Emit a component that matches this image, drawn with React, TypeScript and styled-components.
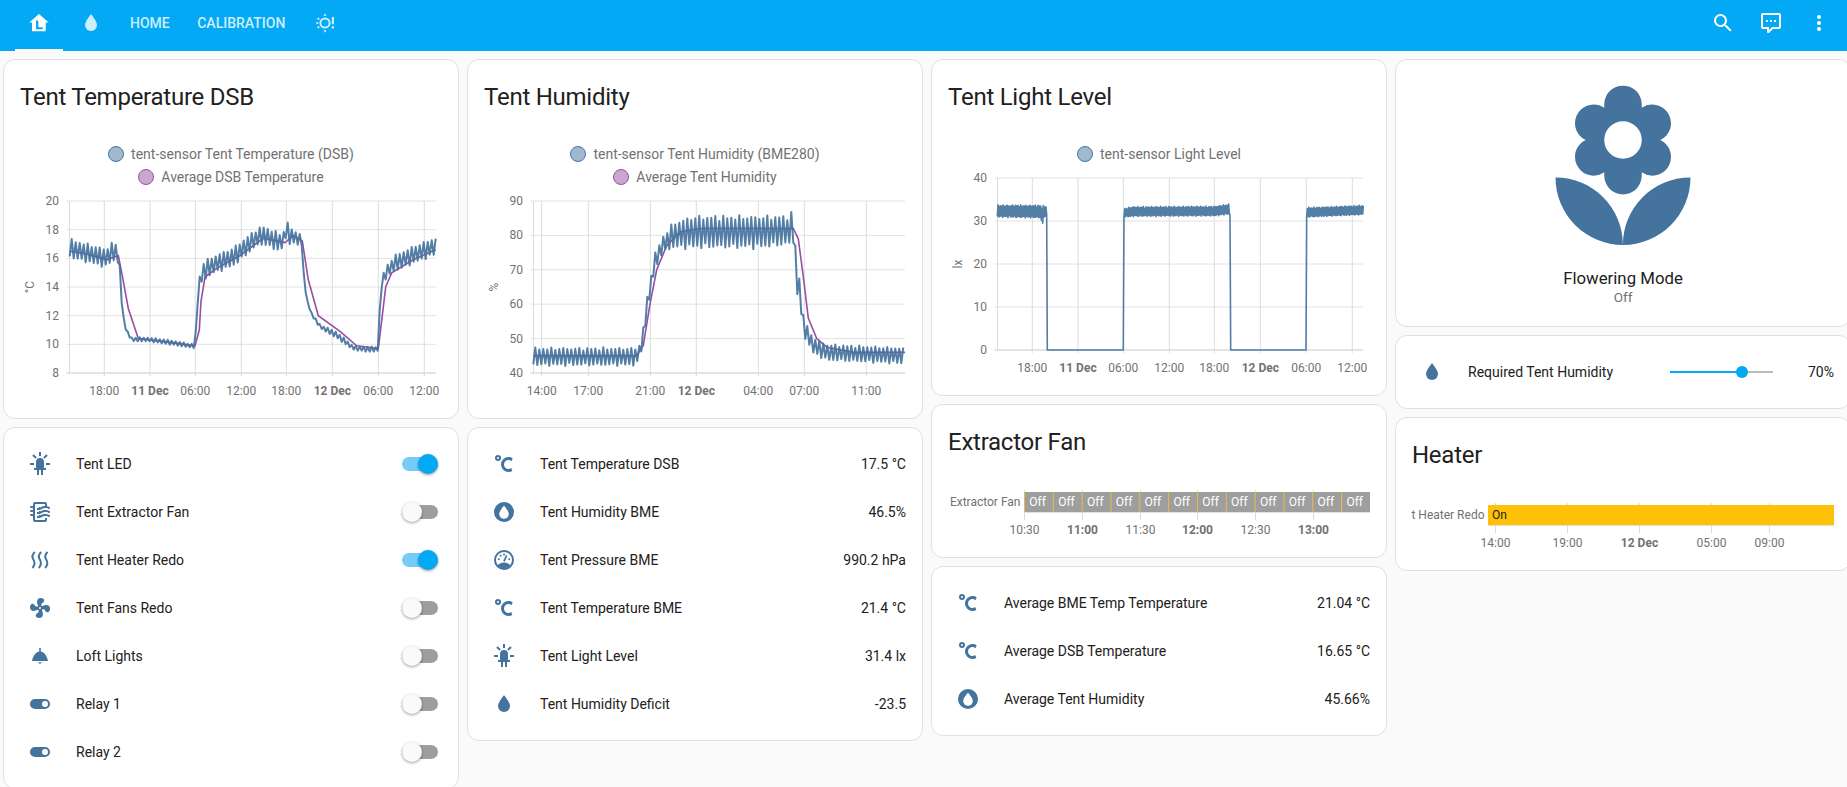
import styled, { createGlobalStyle } from "styled-components";

const BLUE = "#44739e";
const PURPLE = "#984ea3";

const GlobalStyle = createGlobalStyle`
  html, body {
    margin: 0;
    height: 100%;
    overflow: hidden;
    background: #fafafa;
  }
  body {
    font-family: Roboto, "Liberation Sans", sans-serif;
    color: #212121;
  }
`;

// mdi paths
const ICONS = {
  led: "M11,0V4H13V0H11M18.3,2.29L15.24,5.29L16.64,6.71L19.7,3.71L18.3,2.29M5.7,2.29L4.3,3.71L7.36,6.71L8.76,5.29L5.7,2.29M2,11V13H6V11H2M18,11V13H22V11H18M12,6A4,4 0 0,0 8,10V16H6V18H9V23H11V18H13V23H15V18H18V16H16V10A4,4 0 0,0 12,6Z",
  filter:
    "M19,18.31V20A2,2 0 0,1 17,22H7A2,2 0 0,1 5,20V16.3C4.54,16.12 3.95,16 3,16A1,1 0 0,1 2,15A1,1 0 0,1 3,14C3.82,14 4.47,14.08 5,14.21V12.3C4.54,12.12 3.95,12 3,12A1,1 0 0,1 2,11A1,1 0 0,1 3,10C3.82,10 4.47,10.08 5,10.21V8.3C4.54,8.12 3.95,8 3,8A1,1 0 0,1 2,7A1,1 0 0,1 3,6C3.82,6 4.47,6.08 5,6.21V4A2,2 0 0,1 7,2H17A2,2 0 0,1 19,4V6.16C20.78,6.47 21.54,7.13 21.71,7.29C22.1,7.68 22.1,8.32 21.71,8.71C21.32,9.1 20.8,9.09 20.29,8.71V8.71C20.29,8.71 19.25,8 17,8C15.74,8 14.91,8.41 13.95,8.9C12.91,9.41 11.74,10 10,10C9.64,10 9.31,10 9,9.96V7.95C9.3,8 9.63,8 10,8C11.26,8 12.09,7.59 13.05,7.11C14.09,6.59 15.27,6 17,6V4H7V20H17V18C18.5,18 18.97,18.15 19,18.31M17,10C15.27,10 14.09,10.59 13.05,11.11C12.09,11.59 11.26,12 10,12C9.63,12 9.3,12 9,11.95V13.96C9.31,14 9.64,14 10,14C11.74,14 12.91,13.41 13.95,12.9C14.91,12.42 15.74,12 17,12C19.25,12 20.29,12.71 20.29,12.71V12.71C20.8,13.1 21.32,13.1 21.71,12.71C22.1,12.32 22.1,11.69 21.71,11.29C21.5,11.08 20.25,10 17,10M17,14C15.27,14 14.09,14.59 13.05,15.11C12.09,15.59 11.26,16 10,16C9.63,16 9.3,16 9,15.95V17.96C9.31,18 9.64,18 10,18C11.74,18 12.91,17.41 13.95,16.9C14.91,16.42 15.74,16 17,16C19.25,16 20.29,16.71 20.29,16.71V16.71C20.8,17.1 21.32,17.1 21.71,16.71C22.1,16.32 22.1,15.69 21.71,15.29C21.5,15.08 20.25,14 17,14Z",
  fan: "M12,11A1,1 0 0,0 11,12A1,1 0 0,0 12,13A1,1 0 0,0 13,12A1,1 0 0,0 12,11M12.5,2C17,2 17.11,5.57 14.75,6.75C13.76,7.24 13.32,8.29 13.13,9.22C13.61,9.42 14.03,9.73 14.35,10.13C18.05,8.13 22.03,8.92 22.03,12.5C22.03,17 18.46,17.1 17.28,14.73C16.78,13.74 15.72,13.3 14.79,13.11C14.59,13.59 14.28,14 13.88,14.34C15.87,18.03 15.08,22 11.5,22C7,22 6.91,18.42 9.27,17.24C10.25,16.75 10.69,15.71 10.89,14.79C10.4,14.59 9.97,14.27 9.65,13.87C5.96,15.85 2,15.07 2,11.5C2,7 5.56,6.89 6.74,9.26C7.24,10.25 8.29,10.68 9.22,10.87C9.41,10.39 9.73,9.97 10.14,9.65C8.15,5.96 8.94,2 12.5,2Z",
  ceiling: "M11.2 4h1.6v3.5c3.7.6 6.2 4.6 7.2 9.5H4c1-4.9 3.5-8.9 7.2-9.5zM10 18.2h4L12 20z",
  toggle:
    "M17,7H7A5,5 0 0,0 2,12A5,5 0 0,0 7,17H17A5,5 0 0,0 22,12A5,5 0 0,0 17,7M17,15A3,3 0 0,1 14,12A3,3 0 0,1 17,9A3,3 0 0,1 20,12A3,3 0 0,1 17,15Z",
  celsius:
    "M16.5,5C18.05,5 19.5,5.47 20.69,6.28L19.53,9.17C18.73,8.44 17.67,8 16.5,8C14,8 12,10 12,12.5C12,15 14,17 16.5,17C17.53,17 18.47,16.66 19.23,16.08L20.37,18.93C19.24,19.61 17.92,20 16.5,20A7.5,7.5 0 0,1 9,12.5A7.5,7.5 0 0,1 16.5,5M6,3A3,3 0 0,1 9,6A3,3 0 0,1 6,9A3,3 0 0,1 3,6A3,3 0 0,1 6,3M6,5A1,1 0 0,0 5,6A1,1 0 0,0 6,7A1,1 0 0,0 7,6A1,1 0 0,0 6,5Z",
  water: "M12,20A6,6 0 0,1 6,14C6,10 12,3.25 12,3.25C12,3.25 18,10 18,14A6,6 0 0,1 12,20Z",
  waterCircle:
    "M12 2A10 10 0 1 0 12 22A10 10 0 1 0 12 2ZM12 5.8C12 5.8 16.8 10.8 16.8 14A4.8 4.8 0 0 1 7.2 14C7.2 10.8 12 5.8 12 5.8Z",
  flower:
    "M3,13A9,9 0 0,0 12,22C12,17 7.97,13 3,13M12,5.5A2.5,2.5 0 0,1 14.5,8A2.5,2.5 0 0,1 12,10.5A2.5,2.5 0 0,1 9.5,8A2.5,2.5 0 0,1 12,5.5M5.6,10.25A2.5,2.5 0 0,0 8.1,12.75C8.63,12.75 9.12,12.58 9.5,12.31C9.5,12.47 9.5,12.62 9.5,12.75A2.5,2.5 0 0,0 12,15.25A2.5,2.5 0 0,0 14.5,12.75C14.5,12.62 14.5,12.47 14.5,12.31C14.88,12.58 15.37,12.75 15.9,12.75C17.28,12.75 18.4,11.63 18.4,10.25C18.4,9.25 17.81,8.4 16.97,8C17.81,7.6 18.4,6.74 18.4,5.75C18.4,4.37 17.28,3.25 15.9,3.25C15.37,3.25 14.88,3.41 14.5,3.69C14.5,3.53 14.5,3.38 14.5,3.25A2.5,2.5 0 0,0 12,0.75A2.5,2.5 0 0,0 9.5,3.25C9.5,3.38 9.5,3.53 9.5,3.69C9.12,3.41 8.63,3.25 8.1,3.25C6.72,3.25 5.6,4.37 5.6,5.75C5.6,6.74 6.19,7.6 7.03,8C6.19,8.4 5.6,9.25 5.6,10.25M12,22A9,9 0 0,0 21,13C16,13 12,17 12,22Z",
  search:
    "M9.5,3A6.5,6.5 0 0,1 16,9.5C16,11.11 15.41,12.59 14.44,13.73L14.71,14H15.5L20.5,19L19,20.5L14,15.5V14.71L13.73,14.44C12.59,15.41 11.11,16 9.5,16A6.5,6.5 0 0,1 3,9.5A6.5,6.5 0 0,1 9.5,3M9.5,5C7,5 5,7 5,9.5C5,12 7,14 9.5,14C12,14 14,12 14,9.5C14,7 12,5 9.5,5Z",
  comment:
    "M9,22A1,1 0 0,1 8,21V18H4A2,2 0 0,1 2,16V4C2,2.89 2.9,2 4,2H20A2,2 0 0,1 22,4V16A2,2 0 0,1 20,18H13.9L10.2,21.71C10,21.9 9.75,22 9.5,22V22H9M10,16V19.08L13.08,16H20V4H4V16H10M17,11H15V9H17V11M13,11H11V9H13V11M9,11H7V9H9V11Z",
  dots: "M12,16A2,2 0 0,1 14,18A2,2 0 0,1 12,20A2,2 0 0,1 10,18A2,2 0 0,1 12,16M12,10A2,2 0 0,1 14,12A2,2 0 0,1 12,14A2,2 0 0,1 10,12A2,2 0 0,1 12,10M12,4A2,2 0 0,1 14,6A2,2 0 0,1 12,8A2,2 0 0,1 10,6A2,2 0 0,1 12,4Z",
  home: "M12 3L2.3 11.6H5V20.2H18.7V11.6H21.7ZM9 9.5H11.3V16.2H15.7V18.2H9Z",
};

type IconName = keyof typeof ICONS;

const Glyph = ({ name, size = 24 }: { name: IconName; size?: number }) => (
  <svg width={size} height={size} viewBox="0 0 24 24" fill="currentColor">
    <path d={ICONS[name]} fillRule="evenodd" />
  </svg>
);

const HeatWave = () => (
  <svg width="24" height="24" viewBox="0 0 24 24" fill="none" stroke="currentColor" strokeWidth="2">
    <path d="M6.8 4C3.6 7 3.8 9 5.4 11.5C7 14 7.4 16.5 4.4 20" />
    <path d="M13.2 4C10 7 10.2 9 11.8 11.5C13.4 14 13.8 16.5 10.8 20" />
    <path d="M19.6 4C16.4 7 16.6 9 18.2 11.5C19.8 14 20.2 16.5 17.2 20" />
  </svg>
);

const Gauge = () => (
  <svg width="24" height="24" viewBox="0 0 24 24" fill="currentColor">
    <circle cx="12" cy="12" r="9" fill="none" stroke="currentColor" strokeWidth="2" />
    <path d="M5.6 17.6C7.4 15.4 9.6 14.6 12 14.6C14.4 14.6 16.6 15.4 18.4 17.6A9 9 0 0 1 5.6 17.6Z" />
    <circle cx="6.8" cy="11.2" r="1" />
    <circle cx="8.6" cy="7.8" r="1" />
    <circle cx="12" cy="6.4" r="1" />
    <circle cx="17.2" cy="11.2" r="1" />
    <path d="M12 13.4L14.6 7.4" stroke="currentColor" strokeWidth="1.6" />
  </svg>
);

const SunAlert = () => (
  <svg width="24" height="24" viewBox="0 0 24 24" fill="currentColor">
    <circle cx="12" cy="12" r="4.6" fill="none" stroke="currentColor" strokeWidth="2" />
    <path d="M10.4 4.8L12 2.2L13.6 4.8ZM10.4 19.2L12 21.8L13.6 19.2Z" />
    <path d="M4.4 6.8h2v2h-2zM4.4 15.2h2v2h-2zM3.4 11.1h1.8v1.8H3.4z" />
    <path d="M18.8 6h2.2v7.2h-2.2zM18.8 15.2h2.2v2.2h-2.2z" />
  </svg>
);

// Toolbar

const Toolbar = styled.header`
  height: 51px;
  background: #03a9f4;
  display: flex;
  align-items: stretch;
  justify-content: space-between;
  padding: 0 4px 0 15px;
`;

const Tabs = styled.nav`
  display: flex;
  gap: 3.5px;
`;

const Tab = styled.div<{ $active?: boolean; $text?: boolean }>`
  min-width: 48px;
  box-sizing: border-box;
  padding: ${(p) => (p.$text ? "0 12px 3px" : "0 0 3px")};
  display: flex;
  align-items: center;
  justify-content: center;
  color: ${(p) => (p.$active ? "#fff" : "#cdeefd")};
  border-bottom: 2px solid ${(p) => (p.$active ? "#fff" : "transparent")};
  font-size: 14px;
  font-weight: 500;
  text-transform: uppercase;
`;

const Actions = styled.div`
  display: flex;
  align-items: flex-start;
`;

const ActionButton = styled.div`
  width: 48px;
  height: 45px;
  display: flex;
  align-items: center;
  justify-content: center;
  color: #fff;
`;

// Layout

const Board = styled.main`
  display: grid;
  grid-template-columns: repeat(4, 456px);
  gap: 8px;
  padding: 8px 0 0 3px;
  align-items: start;
`;

const Column = styled.div`
  display: flex;
  flex-direction: column;
  gap: 8px;
`;

const Card = styled.section`
  box-sizing: border-box;
  background: #fff;
  border: 1px solid #e0e0e0;
  border-radius: 12px;
`;

const CardTitle = styled.h2`
  margin: 0;
  padding: 21px 16px 0;
  font-size: 24px;
  line-height: 32px;
  font-weight: 400;
  letter-spacing: -0.25px;
  color: #212121;
`;

// Legend

const Legend = styled.div`
  margin-top: 29px;
  display: flex;
  flex-direction: column;
  align-items: center;
`;

const LegendItem = styled.div`
  height: 23px;
  display: flex;
  align-items: center;
  gap: 7px;
  font-size: 14px;
  color: #727272;
`;

const LegendDot = styled.span<{ $color: string; $fill: string }>`
  width: 16px;
  height: 16px;
  box-sizing: border-box;
  border-radius: 50%;
  border: 1.5px solid ${(p) => p.$color};
  background: ${(p) => p.$fill};
`;

const ChartSvg = styled.svg`
  display: block;
  font-family: Roboto, "Liberation Sans", sans-serif;
  font-size: 12px;
`;

// Entities

const Rows = styled.div`
  padding: 16px;
  display: flex;
  flex-direction: column;
  gap: 8px;
`;

const Row = styled.div`
  height: 40px;
  display: flex;
  align-items: center;
  font-size: 14px;
  color: #212121;
`;

const RowIcon = styled.div`
  width: 40px;
  display: flex;
  justify-content: center;
  color: ${BLUE};
`;

const RowName = styled.div`
  flex: 1;
  margin-left: 16px;
`;

const Switch = styled.div<{ $on: boolean }>`
  position: relative;
  width: 36px;
  height: 14px;
  margin-right: 4px;
  border-radius: 7px;
  background: ${(p) => (p.$on ? "#74cdf8" : "#9e9e9e")};

  &::after {
    content: "";
    position: absolute;
    top: -3px;
    left: ${(p) => (p.$on ? "16px" : "0")};
    width: 20px;
    height: 20px;
    border-radius: 50%;
    background: ${(p) => (p.$on ? "#03a9f4" : "#fafafa")};
    box-shadow: 0 1px 3px rgba(0, 0, 0, 0.4);
  }
`;

const Slider = styled.div`
  position: relative;
  width: 103px;
  height: 2px;
  background: #bdbdbd;
`;

const SliderFill = styled.div`
  position: absolute;
  inset: 0 auto 0 0;
  background: #03a9f4;
`;

const SliderThumb = styled.div`
  position: absolute;
  top: -5px;
  width: 12px;
  height: 12px;
  margin-left: -6px;
  border-radius: 50%;
  background: #03a9f4;
`;

const SliderValue = styled.div`
  width: 61px;
  text-align: right;
`;

// Button card

const ButtonCard = styled(Card)`
  height: 268px;
  padding-top: 20px;
  display: flex;
  flex-direction: column;
  align-items: center;
  color: ${BLUE};
`;

const ButtonName = styled.div`
  margin-top: 8px;
  font-size: 16.8px;
  line-height: 20px;
  color: #212121;
`;

const ButtonState = styled.div`
  font-size: 13.5px;
  line-height: 18px;
  color: #727272;
`;

// Charts. Points were read off the reference at 3x, hence toX.

type Band = [number, number, number];
type Point = [number, number];

const sawtooth = (keys: Band[], step: number): Point[] => {
  const pts: Point[] = [];
  const last = keys[keys.length - 1][0];
  let seg = 0;
  let i = 0;
  for (let x = keys[0][0]; x <= last; x += step, i++) {
    while (keys[seg + 1][0] < x) seg++;
    const [x0, h0, l0] = keys[seg];
    const [x1, h1, l1] = keys[seg + 1];
    const t = (x - x0) / (x1 - x0);
    const hi = h0 + (h1 - h0) * t;
    const lo = l0 + (l1 - l0) * t;
    const wobble = 0.82 + 0.18 * Math.sin(i * 1.3) * Math.cos(i * 0.37);
    const mid = (hi + lo) / 2;
    const half = ((hi - lo) / 2) * wobble;
    pts.push([x, i % 2 ? mid + half : mid - half]);
  }
  return pts;
};

const tempBand: Band[] = [
  [209, 17.4, 16], [320, 16.7, 15.3], [335, 17.2, 15.8], [358, 16.8, 15.6], [360, 14.5, 14.3],
  [368, 12.2, 12], [378, 11.1, 10.9], [395, 10.5, 10.2], [440, 10.5, 10.2], [500, 10.35, 10],
  [585, 10, 9.7], [590, 12.2, 12], [597, 14.6, 13.9], [610, 15.8, 14.4], [640, 16.2, 14.9],
  [700, 16.8, 15.4], [770, 18.1, 16.8], [790, 18.3, 16.9], [840, 17.8, 16.4], [854, 18, 16.9],
  [859, 19.1, 17.4], [866, 18.2, 17], [907, 17.7, 16.8], [910, 15.2, 15], [920, 13.2, 13],
  [935, 12.2, 12], [960, 11.4, 11.1], [1010, 10.9, 10.4], [1060, 9.9, 9.6], [1100, 9.85, 9.45],
  [1135, 9.85, 9.5], [1138, 12, 11.8], [1145, 14.8, 13.9], [1160, 15.5, 14.6], [1180, 16.2, 15],
  [1240, 16.9, 15.6], [1307, 17.5, 16.2],
];

const tempAverage: Point[] = [
  [209, 16.5], [260, 16.3], [320, 15.9], [355, 16.2], [365, 15], [385, 12.5], [415, 10.4], [450, 10.3],
  [520, 10.1], [585, 9.9], [598, 11], [603, 13], [615, 14.7], [650, 15.3], [720, 16.2], [790, 17.4],
  [855, 17.1], [880, 17.6], [907, 17.2], [925, 14.5], [955, 12], [1020, 10.9], [1070, 9.9], [1135, 9.7],
  [1147, 12], [1157, 14], [1175, 15], [1240, 15.9], [1307, 16.6],
];

const humidityBand: Band[] = [
  [220, 47.5, 42], [530, 47.5, 42], [540, 48.5, 45], [548, 52, 47], [558, 60, 55], [570, 67, 62],
  [585, 75, 70], [610, 80, 75], [640, 84, 76], [700, 86, 76], [900, 86, 76], [990, 86, 77],
  [998, 88, 78], [1005, 78, 76], [1012, 74, 62], [1020, 66, 62], [1025, 60, 55], [1035, 55, 50],
  [1060, 50.5, 45.5], [1100, 48.5, 43.5], [1335, 47.5, 42.5],
];

const humidityAverage: Point[] = [
  [220, 45], [530, 45], [550, 48], [570, 60], [590, 70], [620, 77], [660, 81], [720, 82], [1000, 82],
  [1015, 79], [1030, 68], [1045, 56], [1070, 50], [1100, 47.5], [1180, 46], [1335, 46],
];

const lightBand: Band[] = [
  [202, 33.8, 30.8], [330, 33.8, 30.6], [337, 33.6, 28.8], [341, 33.6, 30.6], [350, 33.6, 31], [351, 31, 31],
  [352, 0, 0], [580, 0, 0], [581, 33, 30.8], [610, 33.4, 31], [853, 33.5, 31.1], [898, 34, 31.5],
  [900, 31.5, 31.5], [901, 0, 0], [1129, 0, 0], [1130, 33.2, 30.8], [1300, 33.7, 31.4],
];

type Tick = { x: number; label: string; bold?: boolean };

type LineChartProps = {
  yMin: number;
  yMax: number;
  yStep: number;
  unit: string;
  right: number;
  ticks: Tick[];
  toX: (z: number) => number;
  band: Point[];
  average?: Point[];
  bandWidth?: number;
};

const PLOT_LEFT = 65.5;
const PLOT_TOP = 13;
const PLOT_BOTTOM = 185;

const LineChart = ({ yMin, yMax, yStep, unit, right, ticks, toX, band, average, bandWidth = 2 }: LineChartProps) => {
  const toY = (v: number) => PLOT_TOP + ((yMax - v) / (yMax - yMin)) * (PLOT_BOTTOM - PLOT_TOP);
  const line = (pts: Point[]) => pts.map(([x, v]) => `${toX(x).toFixed(1)},${toY(v).toFixed(1)}`).join(" ");
  const values: number[] = [];
  for (let v = yMin; v <= yMax; v += yStep) values.push(v);

  return (
    <ChartSvg width="454" height="230">
      {values.map((v) => (
        <g key={v}>
          <line x1={PLOT_LEFT - 3} x2={right} y1={toY(v)} y2={toY(v)} stroke={v === yMin ? "#c8c8c8" : "#e2e2e2"} />
          <text x="55" y={toY(v) + 4} textAnchor="end" fill="#727272">
            {v}
          </text>
        </g>
      ))}
      <line x1={PLOT_LEFT} x2={PLOT_LEFT} y1={PLOT_TOP} y2={PLOT_BOTTOM} stroke="#dcdcdc" />
      {ticks.map((t) => (
        <g key={t.label + t.x}>
          <line x1={t.x} x2={t.x} y1={PLOT_TOP} y2={PLOT_BOTTOM + 3} stroke="#dcdcdc" />
          <text x={t.x} y="207" textAnchor="middle" fill="#727272" fontWeight={t.bold ? 700 : 400}>
            {t.label}
          </text>
        </g>
      ))}
      <text transform="translate(30 99) rotate(-90)" textAnchor="middle" fill="#727272">
        {unit}
      </text>
      {average && <polyline points={line(average)} fill="none" stroke={PURPLE} strokeWidth="1.6" />}
      <polyline points={line(band)} fill="none" stroke={BLUE} strokeWidth={bandWidth} strokeLinejoin="round" strokeOpacity="0.92" />
    </ChartSvg>
  );
};

const dayTicks: Tick[] = [
  { x: 100.3, label: "18:00" },
  { x: 146, label: "11 Dec", bold: true },
  { x: 191.3, label: "06:00" },
  { x: 237.3, label: "12:00" },
  { x: 282.3, label: "18:00" },
  { x: 328.3, label: "12 Dec", bold: true },
  { x: 374.3, label: "06:00" },
  { x: 420.3, label: "12:00" },
];

const humidityTicks: Tick[] = [
  { x: 73.7, label: "14:00" },
  { x: 120.3, label: "17:00" },
  { x: 182.3, label: "21:00" },
  { x: 228.3, label: "12 Dec", bold: true },
  { x: 290.3, label: "04:00" },
  { x: 336.3, label: "07:00" },
  { x: 398.3, label: "11:00" },
];

type TimelineProps = {
  label: string;
  height: number;
  ticks: Tick[];
  children: React.ReactNode;
};

const Timeline = ({ label, height, ticks, children }: TimelineProps) => (
  <ChartSvg width="454" height={height}>
    <text x="88.5" y="48" textAnchor="end" fill="#727272">
      {label}
    </text>
    {ticks.map((t) => (
      <g key={t.x}>
        <line x1={t.x} x2={t.x} y1="32" y2="62" stroke="#dcdcdc" />
        <text x={t.x} y="76" textAnchor="middle" fill="#727272" fontWeight={t.bold ? 700 : 400}>
          {t.label}
        </text>
      </g>
    ))}
    {children}
    <line x1="92" x2="438" y1="54.5" y2="54.5" stroke="#e0e0e0" />
  </ChartSvg>
);

const fanTicks: Tick[] = [
  { x: 92.5, label: "10:30" },
  { x: 150.5, label: "11:00", bold: true },
  { x: 208.5, label: "11:30" },
  { x: 265.5, label: "12:00", bold: true },
  { x: 323.5, label: "12:30" },
  { x: 381.5, label: "13:00", bold: true },
];

const heaterTicks: Tick[] = [
  { x: 99.5, label: "14:00" },
  { x: 171.5, label: "19:00" },
  { x: 243.5, label: "12 Dec", bold: true },
  { x: 315.5, label: "05:00" },
  { x: 373.5, label: "09:00" },
];

const FAN_SEGMENTS = Array.from({ length: 12 }, (_, i) => 92.3 + i * 28.83);

const FanTimeline = () => (
  <Timeline label="Extractor Fan" height={98.5} ticks={fanTicks}>
    <rect x="92.3" y="34" width="345.7" height="20" fill="#9e9e9e" />
    {FAN_SEGMENTS.map((x) => (
      <g key={x}>
        <line x1={x + 0.2} x2={x + 0.2} y1="34" y2="54" stroke="#e8bc45" />
        <text x={x + 5} y="48" fill="#fff">
          Off
        </text>
      </g>
    ))}
  </Timeline>
);

const HeaterTimeline = () => (
  <Timeline label="t Heater Redo" height={99} ticks={heaterTicks}>
    <rect x="92" y="34" width="346" height="20" fill="#ffc107" />
    <text x="96" y="48" fill="#212121">
      On
    </text>
  </Timeline>
);

type Entity = { icon: React.ReactNode; name: string; value?: string; on?: boolean };

const EntityRows = ({ items }: { items: Entity[] }) => (
  <Rows>
    {items.map((item) => (
      <Row key={item.name}>
        <RowIcon>{item.icon}</RowIcon>
        <RowName>{item.name}</RowName>
        {item.value !== undefined ? <div>{item.value}</div> : <Switch $on={!!item.on} />}
      </Row>
    ))}
  </Rows>
);

const switches: Entity[] = [
  { icon: <Glyph name="led" />, name: "Tent LED", on: true },
  { icon: <Glyph name="filter" />, name: "Tent Extractor Fan" },
  { icon: <HeatWave />, name: "Tent Heater Redo", on: true },
  { icon: <Glyph name="fan" />, name: "Tent Fans Redo" },
  { icon: <Glyph name="ceiling" />, name: "Loft Lights" },
  { icon: <Glyph name="toggle" />, name: "Relay 1" },
  { icon: <Glyph name="toggle" />, name: "Relay 2" },
];

const sensors: Entity[] = [
  { icon: <Glyph name="celsius" />, name: "Tent Temperature DSB", value: "17.5 °C" },
  { icon: <Glyph name="waterCircle" />, name: "Tent Humidity BME", value: "46.5%" },
  { icon: <Gauge />, name: "Tent Pressure BME", value: "990.2 hPa" },
  { icon: <Glyph name="celsius" />, name: "Tent Temperature BME", value: "21.4 °C" },
  { icon: <Glyph name="led" />, name: "Tent Light Level", value: "31.4 lx" },
  { icon: <Glyph name="water" />, name: "Tent Humidity Deficit", value: "-23.5" },
];

const averages: Entity[] = [
  { icon: <Glyph name="celsius" />, name: "Average BME Temp Temperature", value: "21.04 °C" },
  { icon: <Glyph name="celsius" />, name: "Average DSB Temperature", value: "16.65 °C" },
  { icon: <Glyph name="waterCircle" />, name: "Average Tent Humidity", value: "45.66%" },
];

const BlueDot = () => <LegendDot $color={BLUE} $fill="rgba(68, 115, 158, 0.5)" />;
const PurpleDot = () => <LegendDot $color={PURPLE} $fill="rgba(152, 78, 163, 0.5)" />;

export default function App() {
  return (
    <>
      <GlobalStyle />
      <Toolbar>
        <Tabs>
          <Tab $active>
            <Glyph name="home" />
          </Tab>
          <Tab>
            <Glyph name="water" />
          </Tab>
          <Tab $text>Home</Tab>
          <Tab $text>Calibration</Tab>
          <Tab>
            <SunAlert />
          </Tab>
        </Tabs>
        <Actions>
          <ActionButton>
            <Glyph name="search" />
          </ActionButton>
          <ActionButton>
            <Glyph name="comment" />
          </ActionButton>
          <ActionButton>
            <Glyph name="dots" />
          </ActionButton>
        </Actions>
      </Toolbar>

      <Board>
        <Column>
          <Card>
            <CardTitle>Tent Temperature DSB</CardTitle>
            <Legend>
              <LegendItem>
                <BlueDot />
                tent-sensor Tent Temperature (DSB)
              </LegendItem>
              <LegendItem>
                <PurpleDot />
                Average DSB Temperature
              </LegendItem>
            </Legend>
            <LineChart
              yMin={8}
              yMax={20}
              yStep={2}
              unit="°C"
              right={431.7}
              ticks={dayTicks}
              toX={(z) => z / 3 - 4}
              band={sawtooth(tempBand, 6)}
              average={tempAverage}
            />
          </Card>
          <Card>
            <EntityRows items={switches} />
          </Card>
        </Column>

        <Column>
          <Card>
            <CardTitle>Tent Humidity</CardTitle>
            <Legend>
              <LegendItem>
                <BlueDot />
                tent-sensor Tent Humidity (BME280)
              </LegendItem>
              <LegendItem>
                <PurpleDot />
                Average Tent Humidity
              </LegendItem>
            </Legend>
            <LineChart
              yMin={40}
              yMax={90}
              yStep={10}
              unit="%"
              right={437}
              ticks={humidityTicks}
              toX={(z) => z / 3 - 8}
              band={sawtooth(humidityBand, 6)}
              average={humidityAverage}
            />
          </Card>
          <Card>
            <EntityRows items={sensors} />
          </Card>
        </Column>

        <Column>
          <Card>
            <CardTitle>Tent Light Level</CardTitle>
            <Legend>
              <LegendItem>
                <BlueDot />
                tent-sensor Light Level
              </LegendItem>
            </Legend>
            <LineChart
              yMin={0}
              yMax={40}
              yStep={10}
              unit="lx"
              right={431}
              ticks={dayTicks}
              toX={(z) => z / 3 - 2}
              band={sawtooth(lightBand, 2)}
              bandWidth={1.6}
            />
          </Card>
          <Card>
            <CardTitle>Extractor Fan</CardTitle>
            <FanTimeline />
          </Card>
          <Card>
            <EntityRows items={averages} />
          </Card>
        </Column>

        <Column>
          <ButtonCard>
            <Glyph name="flower" size={180} />
            <ButtonName>Flowering Mode</ButtonName>
            <ButtonState>Off</ButtonState>
          </ButtonCard>
          <Card>
            <Rows>
              <Row>
                <RowIcon>
                  <Glyph name="water" />
                </RowIcon>
                <RowName>Required Tent Humidity</RowName>
                <Slider>
                  <SliderFill style={{ width: "70%" }} />
                  <SliderThumb style={{ left: "70%" }} />
                </Slider>
                <SliderValue>70%</SliderValue>
              </Row>
            </Rows>
          </Card>
          <Card>
            <CardTitle>Heater</CardTitle>
            <HeaterTimeline />
          </Card>
        </Column>
      </Board>
    </>
  );
}
